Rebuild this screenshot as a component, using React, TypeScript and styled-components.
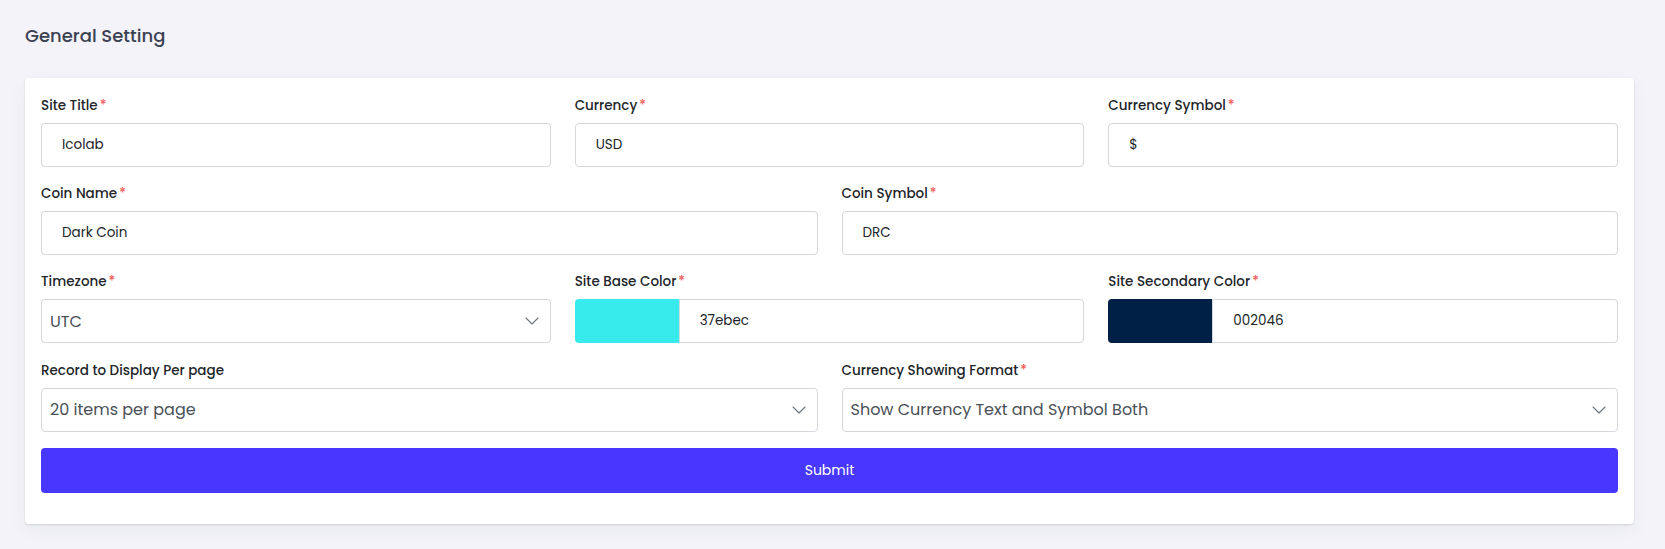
import React from "react";
import styled, { createGlobalStyle } from "styled-components";

const GlobalStyle = createGlobalStyle`
  html, body { margin: 0; padding: 0; }
  body {
    background: #f3f3f9;
    font-family: "Poppins", "Inter", "Noto Sans", sans-serif;
    color: #212529;
  }
  * { box-sizing: border-box; }
`;

const Page = styled.div`
  padding: 24px 31px 26px 25px;
`;

const Title = styled.h4`
  margin: 0 0 30px 0;
  font-size: 18px;
  line-height: 24px;
  font-weight: 500;
  color: #3a4152;
`;

const Card = styled.div`
  background: #ffffff;
  border-radius: 4px;
  box-shadow: 0 1px 2px rgba(56, 65, 74, 0.15), 0 6px 18px rgba(56, 65, 74, 0.05);
  padding: 17px 16px 31px 16px;
`;

const Grid = styled.div<{ $cols: number }>`
  display: grid;
  grid-template-columns: repeat(${(p) => p.$cols}, 1fr);
  column-gap: 24px;
`;

const Group = styled.div`
  margin-bottom: 16.2px;
  min-width: 0;
`;

const Label = styled.label`
  display: block;
  font-size: 13.5px;
  line-height: 21px;
  font-weight: 500;
  color: #212529;
  margin-bottom: 7px;
`;

const Req = styled.span`
  color: #ef5b5b;
  margin-left: 2px;
`;

const TextBox = styled.div`
  height: 44px;
  border: 1px solid #d4d7dc;
  border-radius: 4px;
  padding: 0 20px;
  display: flex;
  align-items: center;
  font-size: 13.5px;
  color: #212529;
  background: #fff;
`;

const SelectBox = styled.div`
  height: 44px;
  border: 1px solid #d4d7dc;
  border-radius: 4px;
  padding: 0 11px 0 8px;
  display: flex;
  align-items: center;
  justify-content: space-between;
  font-size: 16px;
  font-weight: 400;
  color: #495057;
  background: #fff;
`;

const ColorField = styled.div`
  height: 44px;
  display: flex;
`;

const Swatch = styled.div<{ $color: string }>`
  width: 104px;
  flex: none;
  background: ${(p) => p.$color};
  border-radius: 4px 0 0 4px;
`;

const ColorText = styled.div`
  flex: 1;
  border: 1px solid #d4d7dc;
  border-radius: 0 4px 4px 0;
  padding: 0 20px;
  display: flex;
  align-items: center;
  font-size: 13.5px;
  color: #212529;
`;

const SubmitButton = styled.button`
  display: block;
  width: 100%;
  height: 45px;
  border: none;
  border-radius: 4px;
  background: #4737ff;
  color: #ffffff;
  font-family: inherit;
  font-size: 14px;
  font-weight: 400;
  cursor: pointer;
`;

const Chevron = () => (
  <svg width="14" height="8" viewBox="0 0 14 8" fill="none">
    <path d="M1 1l6 6 6-6" stroke="#6c757d" strokeWidth="1.1" strokeLinecap="round" strokeLinejoin="round" />
  </svg>
);

const Field = ({ label, required, children }: { label: string; required?: boolean; children: React.ReactNode }) => (
  <Group>
    <Label>
      {label}
      {required && <Req>*</Req>}
    </Label>
    {children}
  </Group>
);

export default function App() {
  return (
    <>
      <GlobalStyle />
      <Page>
        <Title>General Setting</Title>
        <Card>
          <Grid $cols={3}>
            <Field label="Site Title" required>
              <TextBox>Icolab</TextBox>
            </Field>
            <Field label="Currency" required>
              <TextBox>USD</TextBox>
            </Field>
            <Field label="Currency Symbol" required>
              <TextBox>$</TextBox>
            </Field>
          </Grid>
          <Grid $cols={2}>
            <Field label="Coin Name" required>
              <TextBox>Dark Coin</TextBox>
            </Field>
            <Field label="Coin Symbol" required>
              <TextBox>DRC</TextBox>
            </Field>
          </Grid>
          <Grid $cols={3}>
            <Field label="Timezone" required>
              <SelectBox>
                UTC
                <Chevron />
              </SelectBox>
            </Field>
            <Field label="Site Base Color" required>
              <ColorField>
                <Swatch $color="#37ebec" />
                <ColorText>37ebec</ColorText>
              </ColorField>
            </Field>
            <Field label="Site Secondary Color" required>
              <ColorField>
                <Swatch $color="#002046" />
                <ColorText>002046</ColorText>
              </ColorField>
            </Field>
          </Grid>
          <Grid $cols={2}>
            <Field label="Record to Display Per page">
              <SelectBox>
                20 items per page
                <Chevron />
              </SelectBox>
            </Field>
            <Field label="Currency Showing Format" required>
              <SelectBox>
                Show Currency Text and Symbol Both
                <Chevron />
              </SelectBox>
            </Field>
          </Grid>
          <SubmitButton type="button">Submit</SubmitButton>
        </Card>
      </Page>
    </>
  );
}
